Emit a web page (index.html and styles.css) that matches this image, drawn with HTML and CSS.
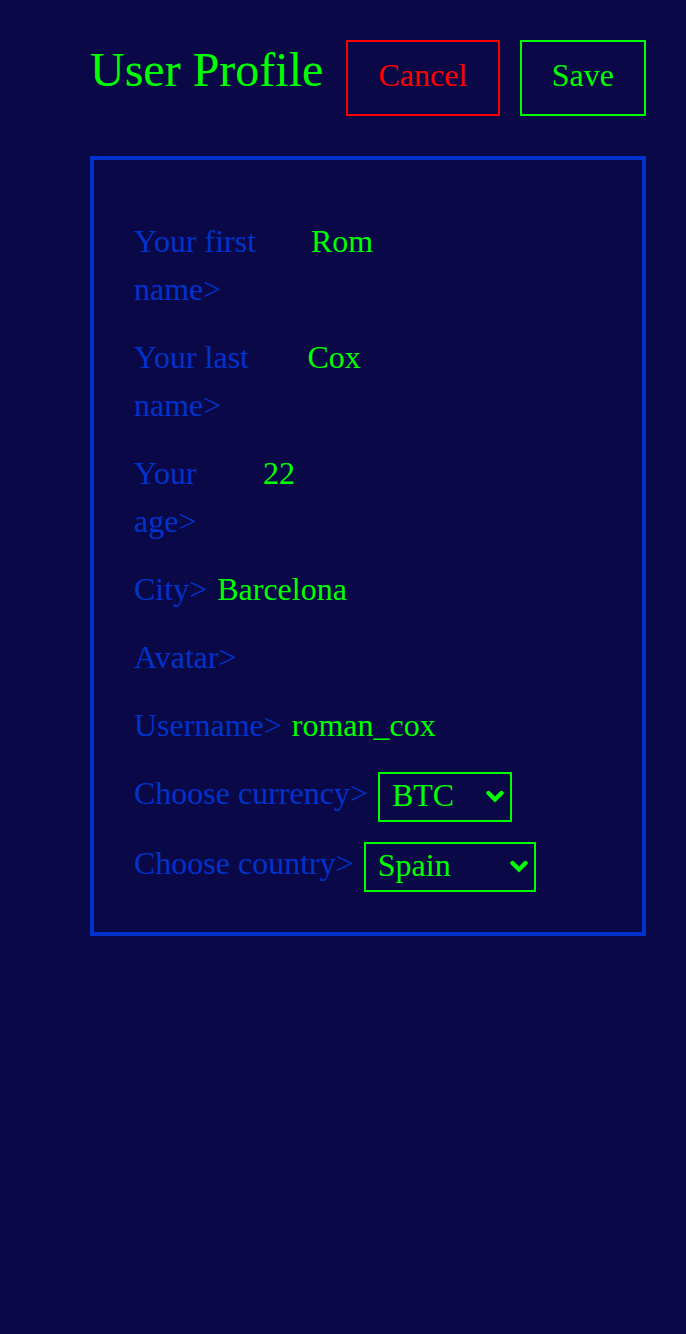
FILE: index.html
```
<!DOCTYPE html>
<html lang="en">
<head>
<meta charset="utf-8">
<title>User Profile</title>
<link rel="stylesheet" href="styles.css">
</head>
<body>
<div class="page">
  <header class="topbar">
    <h1 class="title">User Profile</h1>
    <div class="actions">
      <button class="btn btn-cancel" type="button">Cancel</button>
      <button class="btn btn-save" type="button">Save</button>
    </div>
  </header>
  <form class="card">
    <div class="row">
      <label class="label" for="first">Your first name&gt;</label>
      <input class="value" id="first" type="text" value="Rom">
    </div>
    <div class="row">
      <label class="label" for="last">Your last name&gt;</label>
      <input class="value" id="last" type="text" value="Cox">
    </div>
    <div class="row">
      <label class="label" for="age">Your age&gt;</label>
      <input class="value" id="age" type="text" value="22">
    </div>
    <div class="row">
      <label class="label" for="city">City&gt;</label>
      <input class="value" id="city" type="text" value="Barcelona">
    </div>
    <div class="row">
      <label class="label">Avatar&gt;</label>
    </div>
    <div class="row">
      <label class="label" for="username">Username&gt;</label>
      <input class="value" id="username" type="text" value="roman_cox">
    </div>
    <div class="row row-select">
      <label class="label" for="currency">Choose currency&gt;</label>
      <span class="select-wrap">
        <select class="select select-currency" id="currency">
          <option>BTC</option>
          <option>ETH</option>
          <option>USD</option>
        </select>
        <svg class="chevron" width="18" height="13" viewBox="0 0 18 13" aria-hidden="true"><path d="M2.5 3 L9 9.5 L15.5 3" fill="none" stroke="#00ff00" stroke-width="4.4" stroke-linecap="round" stroke-linejoin="miter"/></svg>
      </span>
    </div>
    <div class="row row-select">
      <label class="label" for="country">Choose country&gt;</label>
      <span class="select-wrap">
        <select class="select select-country" id="country">
          <option>Spain</option>
          <option>France</option>
          <option>Italy</option>
        </select>
        <svg class="chevron" width="18" height="13" viewBox="0 0 18 13" aria-hidden="true"><path d="M2.5 3 L9 9.5 L15.5 3" fill="none" stroke="#00ff00" stroke-width="4.4" stroke-linecap="round" stroke-linejoin="miter"/></svg>
      </span>
    </div>
  </form>
</div>
</body>
</html>
```

FILE: styles.css
```
html, body {
  margin: 0;
  padding: 0;
}

body {
  background: #0a0847;
  min-height: 100vh;
  font-family: "Liberation Serif", "Times New Roman", serif;
  color: #0033cc;
}

.page {
  display: flex;
  flex-direction: column;
}

.topbar {
  display: flex;
  align-items: baseline;
  padding: 40px 40px 0 90px;
}

.title {
  margin: 0;
  font-size: 48px;
  font-weight: normal;
  line-height: normal;
  color: #00ff00;
}

.actions {
  display: flex;
  gap: 20px;
  margin-left: auto;
}

.btn {
  font-family: "Liberation Serif", "Times New Roman", serif;
  font-size: 32px;
  line-height: normal;
  background: transparent;
  border: 2px solid;
  padding: 15px 30px 20px;
  margin: 0;
  cursor: pointer;
}

.btn-cancel {
  color: #ff0000;
  border-color: #ff0000;
  padding-left: 30.5px;
  padding-right: 30.5px;
}

.btn-save {
  color: #00ff00;
  border-color: #00ff00;
}

.card {
  margin: 40px 40px 0 90px;
  border: 4px solid #0033cc;
  padding: 57px 40px 43px;
  display: flex;
  flex-direction: column;
  gap: 20px;
}

.row {
  display: flex;
  align-items: baseline;
  gap: 10px;
}

.row-select {
  align-items: flex-start;
}

.label {
  flex: 0 1 auto;
  font-size: 32px;
  line-height: 48px;
  color: #0033cc;
}

.value {
  flex: 0 1 379px;
  min-width: 0;
  font-family: "Liberation Serif", "Times New Roman", serif;
  font-size: 32px;
  line-height: normal;
  color: #00ff00;
  background: transparent;
  border: 0;
  padding: 0;
  margin: 0;
  outline: none;
}

.select-wrap {
  position: relative;
  display: flex;
  flex: 0 0 auto;
  margin: 3px 0 -3px;
}

.select {
  -webkit-appearance: none;
  appearance: none;
  box-sizing: border-box;
  height: 50px;
  font-family: "Liberation Serif", "Times New Roman", serif;
  font-size: 32px;
  line-height: normal;
  color: #00ff00;
  background-color: #0a0847;
  border: 2px solid #00ff00;
  border-radius: 0;
  padding: 0 30px 4px 12px;
  margin: 0;
  outline: none;
}

.select-currency {
  width: 134px;
}

.select-country {
  width: 172px;
}

.chevron {
  position: absolute;
  right: 8px;
  top: 18px;
  pointer-events: none;
}
```
